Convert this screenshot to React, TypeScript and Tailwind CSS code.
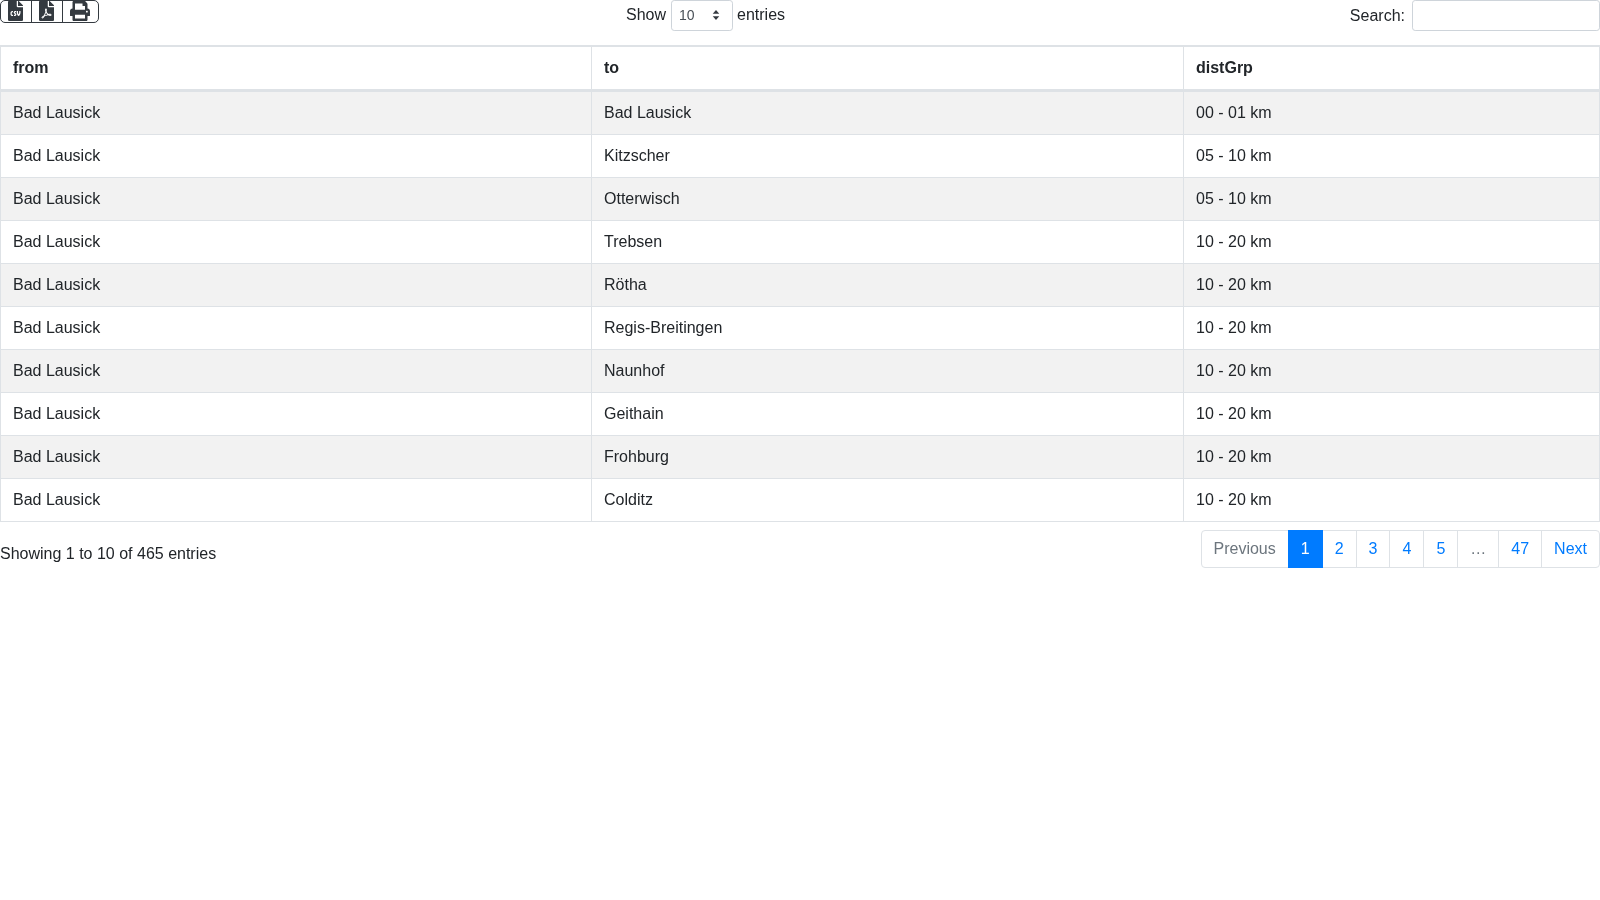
import { FaFileCsv, FaFilePdf, FaPrint } from 'react-icons/fa';

const rows = [
  ['Bad Lausick', 'Bad Lausick', '00 - 01 km'],
  ['Bad Lausick', 'Kitzscher', '05 - 10 km'],
  ['Bad Lausick', 'Otterwisch', '05 - 10 km'],
  ['Bad Lausick', 'Trebsen', '10 - 20 km'],
  ['Bad Lausick', 'Rötha', '10 - 20 km'],
  ['Bad Lausick', 'Regis-Breitingen', '10 - 20 km'],
  ['Bad Lausick', 'Naunhof', '10 - 20 km'],
  ['Bad Lausick', 'Geithain', '10 - 20 km'],
  ['Bad Lausick', 'Frohburg', '10 - 20 km'],
  ['Bad Lausick', 'Colditz', '10 - 20 km'],
];

const pages = ['2', '3', '4', '5'];

export default function App() {
  return (
    <div className="min-h-[900px] bg-white text-[16px] leading-6 text-[#212529] font-['Liberation_Sans',sans-serif] [will-change:transform]">
      <div className="grid h-[45px] grid-cols-[99px_1213px_1fr]">
        <div>
          <div className="flex h-[23px] w-[99px] items-center overflow-hidden rounded-[5px] border border-[#343a40] text-[#343a40]">
            <span className="flex h-full w-[31px] items-center justify-center border-r border-[#343a40] pb-px pr-[2px]">
              <FaFileCsv className="h-[20px] w-[15px]" />
            </span>
            <span className="flex h-full w-[31px] items-center justify-center border-r border-[#343a40] pb-px pr-px">
              <FaFilePdf className="h-[20px] w-[15px]" />
            </span>
            <span className="flex h-full flex-1 items-center justify-center pb-px pr-[2px]">
              <FaPrint className="h-[20px] w-[20px]" />
            </span>
          </div>
        </div>
        <div className="flex h-[31px] items-center justify-center">
          <span className="pb-[2px]">Show</span>
          <div className="ml-[5px] mr-1 flex h-[31px] w-[62px] items-center justify-between rounded-[3.2px] border border-[#ced4da] pb-px pl-[7px] pr-[12px] text-[14px] text-[#495057]">
            <span>10</span>
            <svg width="8" height="10" viewBox="0 0 8 11" className="fill-[#343a40]">
              <path d="M4 0 7.6 4.2H.4zM4 11 .4 6.8h7.2z" />
            </svg>
          </div>
          <span className="pb-[2px]">entries</span>
        </div>
        <div className="flex h-[31px] items-center justify-end">
          <span>Search:</span>
          <input className="ml-[7px] h-[31px] w-[188px] rounded-[3.2px] border border-[#ced4da] bg-white" />
        </div>
      </div>

      <div className="border-t border-[#dee2e6]">
        <table className="w-full table-fixed border-separate border-spacing-0">
          <colgroup>
            <col className="w-[591px]" />
            <col className="w-[592px]" />
            <col />
          </colgroup>
          <thead>
            <tr className="h-[46px]">
              {['from', 'to', 'distGrp'].map((h) => (
                <th
                  key={h}
                  className="border-t border-b-[3px] border-l border-[#dee2e6] px-3 text-left font-bold last:border-r"
                >
                  {h}
                </th>
              ))}
            </tr>
          </thead>
          <tbody>
            {rows.map((r, i) => (
              <tr key={i} className={`h-[43px] ${i % 2 === 0 ? 'bg-[#f2f2f2]' : 'bg-white'}`}>
                {r.map((c, j) => (
                  <td key={j} className="border-b border-l border-[#dee2e6] px-3 last:border-r">
                    {c}
                  </td>
                ))}
              </tr>
            ))}
          </tbody>
        </table>
      </div>

      <div className="flex items-start justify-between">
        <div className="pt-[20px]">Showing 1 to 10 of 465 entries</div>
        <ul className="mt-2 flex h-[38px]">
          <li className="flex items-center rounded-l-[4px] border border-[#dee2e6] px-3 text-[#6c757d]">Previous</li>
          <li className="z-10 -ml-px flex items-center border border-[#007bff] bg-[#007bff] px-3 text-white">1</li>
          {pages.map((p) => (
            <li key={p} className="-ml-px flex items-center border border-[#dee2e6] px-3 text-[#007bff]">
              {p}
            </li>
          ))}
          <li className="-ml-px flex items-center border border-[#dee2e6] px-3 text-[#6c757d]">…</li>
          <li className="-ml-px flex items-center border border-[#dee2e6] px-3 text-[#007bff]">47</li>
          <li className="-ml-px flex items-center rounded-r-[4px] border border-[#dee2e6] px-3 text-[#007bff]">Next</li>
        </ul>
      </div>
    </div>
  );
}
